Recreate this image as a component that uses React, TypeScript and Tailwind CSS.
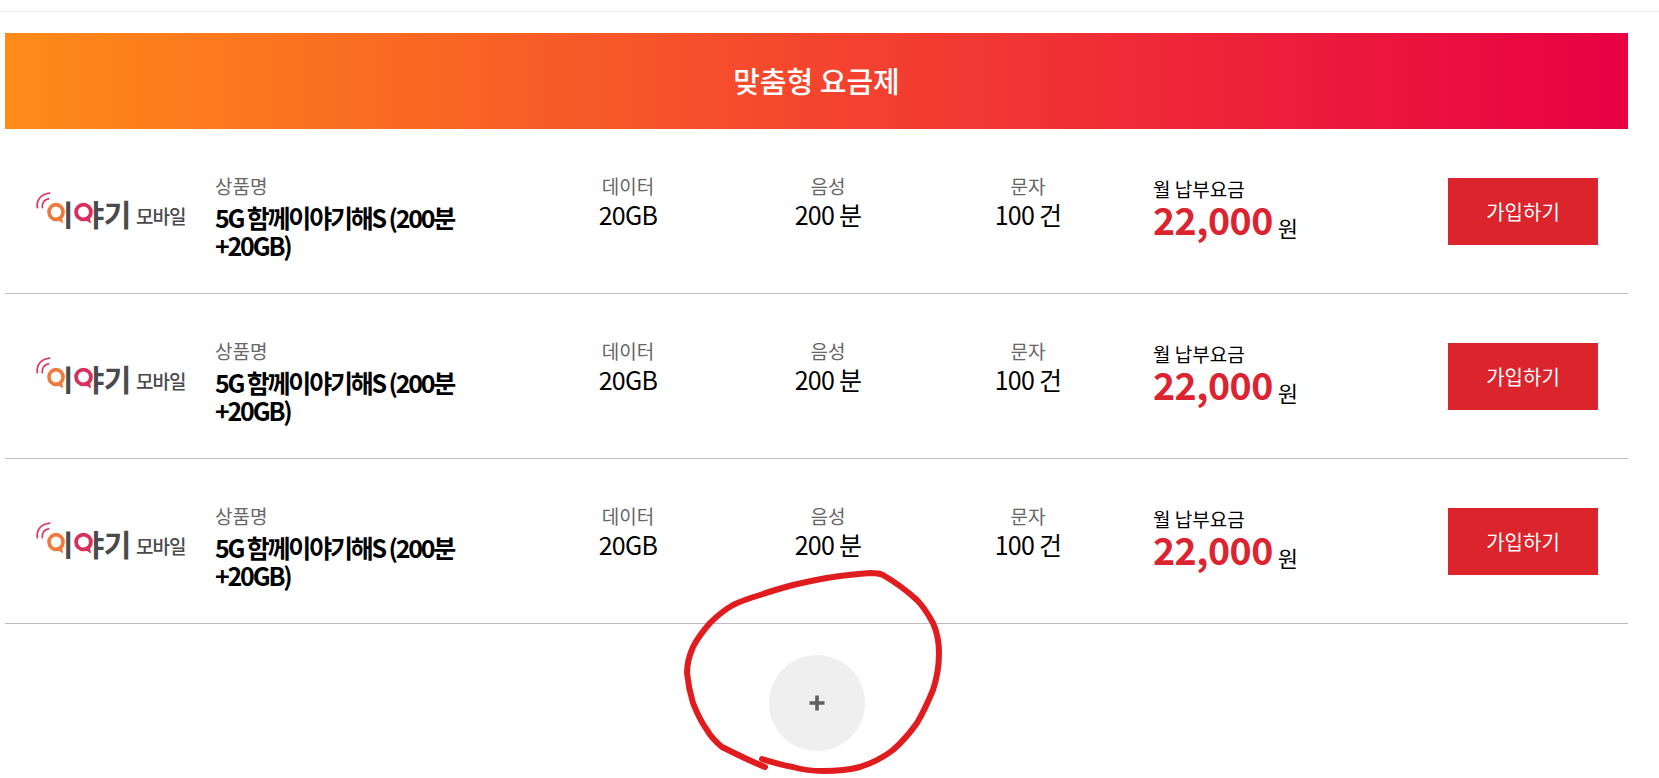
const FONT = "font-['Noto_Sans_CJK_KR','Noto_Sans',sans-serif]";

function Bubble({ color, w }: { color: string; w: number }) {
  return (
    <svg width={w} height="24" viewBox="0 0 19 24" preserveAspectRatio="none" className="shrink-0" aria-hidden="true">
      <circle cx="9.5" cy="11" r="7.4" fill="none" stroke={color} strokeWidth="3.8" />
      <path d="M9 17.5 L17 22.5 L15.5 14 Z" fill={color} />
    </svg>
  );
}

function Logo() {
  return (
    <div className="relative flex items-end w-[150px] h-[40px]">
      <svg width="18" height="20" viewBox="0 0 16 18" className="absolute left-0 top-[3px]" aria-hidden="true">
        <path d="M2 15 C1 8 5 3 13 2" fill="none" stroke="#d93a63" strokeWidth="1.6" strokeLinecap="round" />
        <path d="M6.5 15 C6 11 8 8 12 7" fill="none" stroke="#d93a63" strokeWidth="1.6" strokeLinecap="round" />
      </svg>
      <div className="flex items-center h-[30px] pl-[12px]">
        <Bubble color="#ee7a3c" w={18} />
        <span className="w-[6px] flex justify-center text-[30px] font-bold leading-[30px] text-[#4a4a4a] whitespace-nowrap">ㅣ</span>
        <span className="w-[3px]" />
        <Bubble color="#d92f5f" w={19} />
        <span className="w-[9px] flex justify-center text-[30px] font-bold leading-[30px] text-[#4a4a4a] whitespace-nowrap">ㅑ</span>
        <span className="ml-[2px] w-[27px] flex justify-center text-[30px] font-bold leading-[30px] text-[#4a4a4a] whitespace-nowrap">기</span>
      </div>
      <span className="text-[19px] leading-[25px] font-medium text-[#4a4a4a] ml-[5px] tracking-[-1px] whitespace-nowrap">모바일</span>
    </div>
  );
}

function Spec({ label, value }: { label: string; value: string }) {
  return (
    <div className="w-[200px] flex flex-col items-center pt-[43px]">
      <span className="text-[19px] leading-[27px] text-[#666]">{label}</span>
      <span className="text-[25px] leading-[30px] text-black tracking-[-0.7px]">{value}</span>
    </div>
  );
}

function Row() {
  return (
    <div className="flex h-[165px] border-b border-[#bdbdbd] items-start">
      <div className="w-[211px] pl-[30px] pt-[59px]">
        <Logo />
      </div>
      <div className="w-[312px] pt-[43px]">
        <div className="-ml-[1px] text-[19px] leading-[28px] text-[#666]">상품명</div>
        <div className="w-[245px] -ml-[1px] mt-[3px] text-[25px] leading-[28px] font-bold text-black tracking-[-2.2px]">
          5G 함께이야기해S (200분+20GB)
        </div>
      </div>
      <Spec label="데이터" value="20GB" />
      <Spec label="음성" value="200 분" />
      <Spec label="문자" value="100 건" />
      <div className="w-[320px] pl-[25px] pt-[48px]">
        <div className="text-[19px] leading-[24px] text-black">월 납부요금</div>
        <div className="flex items-baseline h-[42px] leading-[36px]">
          <span className="text-[37.5px] font-bold text-[#dc2430] tracking-[-0.5px]">22,000</span>
          <span className="text-[22px] text-black ml-[5px] translate-y-[2px]">원</span>
        </div>
      </div>
      <button className="mt-[49px] w-[150px] h-[67px] bg-[#dc242c] text-white text-[20px] shrink-0">가입하기</button>
    </div>
  );
}

export default function App() {
  return (
    <div className={`relative h-[778px] overflow-hidden bg-white ${FONT}`}>
      <div className="h-[12px] border-b border-[#eeeeee]" />
      <div className="ml-[5px] w-[1623px] mt-[21px]">
        <div className="h-[96px] flex items-center justify-center bg-linear-to-r/srgb from-[#ff8b18] to-[#e80044] text-white text-[29px] font-medium">
          맞춤형 요금제
        </div>
        <Row />
        <Row />
        <Row />
        <div className="flex justify-center mt-[31px]">
          <button className="w-[96px] h-[96px] rounded-full bg-[#efefef] flex items-center justify-center" aria-label="더보기">
            <svg width="18" height="18" viewBox="0 0 18 18" aria-hidden="true">
              <path d="M9 1.5V16.5M1.5 9H16.5" stroke="#5f5f5f" strokeWidth="3.6" />
            </svg>
          </button>
        </div>
      </div>
      <svg className="absolute left-0 top-0 pointer-events-none" width="1659" height="778" aria-hidden="true">
        <path
          d="M762 759 C772 762 782 765 793 767 C803 770 813 771 823 771 C836 771 849 770 860 767 C872 763 883 758 893 750 C902 742 910 733 917 723 C923 713 928 702 933 690 C937 678 939 665 939 653 C939 642 937 632 933 623 C928 614 924 607 917 600 C906 590 895 582 883 575 C879 573 875 573 870 573 C857 574 845 575 833 577 C819 579 806 582 793 585 C782 588 771 591 760 595 C750 598 741 601 733 605 C724 610 717 616 710 623 C703 631 697 639 693 647 C689 656 687 664 687 673 C688 683 690 693 693 703 C697 713 701 722 707 730 C711 737 716 742 722 747 C736 754 750 761 765 767"
          fill="none"
          stroke="#e01c1f"
          strokeWidth="6"
          strokeLinecap="round"
          strokeLinejoin="round"
        />
      </svg>
    </div>
  );
}
